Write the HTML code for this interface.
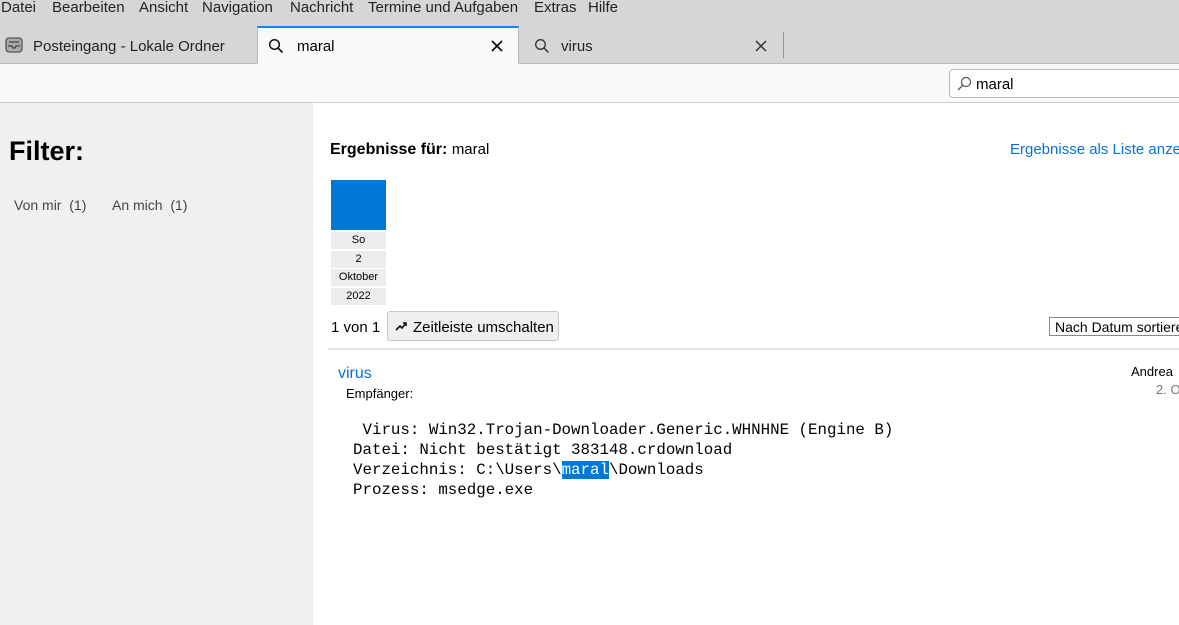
<!DOCTYPE html>
<html><head><meta charset="utf-8"><style>
*{margin:0;padding:0;box-sizing:border-box}
body{width:1179px;height:625px;overflow:hidden;font-family:"Liberation Sans",sans-serif;background:#fff;position:relative;color:#000}
.abs{position:absolute;white-space:nowrap}
#menu{left:0;top:0;width:1179px;height:26px;background:#d6d6d6;font-size:15px;color:#222}
#menu span{position:absolute;top:-1px}
#tabs{left:0;top:26px;width:1179px;height:38px;background:#d6d6d6;border-bottom:1px solid #bbb}
#tool{left:0;top:64px;width:1179px;height:39px;background:#f9f9f9;border-bottom:1px solid #ccc}
#left{left:0;top:103px;width:313px;height:522px;background:#f0f0f0}
.mono{font-family:"Liberation Mono",monospace;font-size:15.8px;white-space:pre;line-height:20px}
.cal{left:331px;width:55px;height:17px;background:#ececec;font-size:11px;text-align:center;line-height:17px}
</style></head><body>
<div id="menu" class="abs">
<span style="left:1px">Datei</span><span style="left:52px">Bearbeiten</span><span style="left:139px">Ansicht</span><span style="left:202px">Navigation</span><span style="left:290px">Nachricht</span><span style="left:368px">Termine und Aufgaben</span><span style="left:534px">Extras</span><span style="left:588px">Hilfe</span>
</div>
<div id="tabs" class="abs">
 <svg class="abs" style="left:5px;top:11px" width="18" height="16" viewBox="0 0 18 16"><rect x="1" y="1" width="16" height="14" rx="3" fill="#aaa" stroke="#555" stroke-width="1.3"/><path d="M4 5h10M3 9h4l1 2h2l1-2h4" stroke="#444" stroke-width="1.3" fill="none"/></svg>
 <div class="abs" style="left:33px;top:12px;font-size:15px;color:#222">Posteingang - Lokale Ordner</div>
 <div class="abs" style="left:257px;top:0;width:262px;height:39px;background:#fafafa;border-top:2px solid #0a84ff;border-left:1px solid #bbb;border-right:1px solid #bbb"></div>
 <svg class="abs" style="left:268px;top:12px" width="16" height="16" viewBox="0 0 16 16"><circle cx="6.5" cy="6.5" r="4.8" stroke="#111" stroke-width="1.5" fill="none"/><path d="M10 10l4.5 4.5" stroke="#111" stroke-width="1.6"/></svg>
 <div class="abs" style="left:297px;top:12px;font-size:15px">maral</div>
 <svg class="abs" style="left:490px;top:13px" width="14" height="14" viewBox="0 0 14 14"><path d="M2 2l10 10M12 2L2 12" stroke="#111" stroke-width="1.8"/></svg>
 <svg class="abs" style="left:534px;top:12px" width="16" height="16" viewBox="0 0 16 16"><circle cx="6.5" cy="6.5" r="4.8" stroke="#333" stroke-width="1.3" fill="none"/><path d="M10 10l4.5 4.5" stroke="#333" stroke-width="1.4"/></svg>
 <div class="abs" style="left:561px;top:12px;font-size:15px;color:#222">virus</div>
 <svg class="abs" style="left:754px;top:13px" width="14" height="14" viewBox="0 0 14 14"><path d="M2 2l10 10M12 2L2 12" stroke="#333" stroke-width="1.5"/></svg>
 <div class="abs" style="left:783px;top:6px;width:1px;height:26px;background:#999"></div>
</div>
<div id="tool" class="abs">
 <div class="abs" style="left:949px;top:5px;width:240px;height:29px;background:#fff;border:1px solid #bbb;border-radius:4px"></div>
 <svg class="abs" style="left:956px;top:12px" width="16" height="16" viewBox="0 0 16 16"><circle cx="10" cy="6" r="4.5" stroke="#555" stroke-width="1.2" fill="none"/><path d="M7 9l-5 5" stroke="#555" stroke-width="1.3"/></svg>
 <div class="abs" style="left:976px;top:12px;font-size:15px">maral</div>
</div>
<div id="left" class="abs">
 <div class="abs" style="left:9px;top:33px;font-size:27px;font-weight:bold">Filter:</div>
 <div class="abs" style="left:14px;top:94px;font-size:14px;color:#444">Von mir&nbsp; (1)</div>
 <div class="abs" style="left:112px;top:94px;font-size:14px;color:#444">An mich&nbsp; (1)</div>
</div>
<div class="abs" style="left:330px;top:141px;font-size:16px"><b>Ergebnisse für:</b> <span style="font-size:15px">maral</span></div>
<div class="abs" style="left:1010px;top:141px;font-size:15px;color:#0a6fd8">Ergebnisse als Liste anzeigen</div>
<div class="abs" style="left:331px;top:180px;width:55px;height:50px;background:#0078d7"></div>
<div class="abs cal" style="top:232px">So</div>
<div class="abs cal" style="top:251px">2</div>
<div class="abs cal" style="top:269px">Oktober</div>
<div class="abs cal" style="top:288px">2022</div>
<div class="abs" style="left:331px;top:319px;font-size:15px">1 von 1</div>
<div class="abs" style="left:387px;top:311px;width:172px;height:30px;background:#efefef;border:1px solid #c8c8c8;border-radius:3px;font-size:15px;padding:7px 0 0 25px">Zeitleiste umschalten</div>
<svg class="abs" style="left:395px;top:321px" width="12" height="10" viewBox="0 0 12 10"><path d="M1 9l4-4 2 2 4-5M8 2h3v3" stroke="#111" stroke-width="1.6" fill="none"/></svg>
<div class="abs" style="left:1049px;top:317px;width:140px;height:19px;border:1px solid #888;font-size:14px;padding:1px 0 0 5px">Nach Datum sortieren</div>
<div class="abs" style="left:328px;top:348px;width:851px;height:2px;background:#e2e2e2"></div>
<div class="abs" style="left:338px;top:365px;font-size:16px;color:#0a6fd8">virus</div>
<div class="abs" style="left:346px;top:386px;font-size:13px">Empfänger:</div>
<div class="abs" style="left:1131px;top:364px;font-size:13px">Andrea</div>
<div class="abs" style="left:1156px;top:382px;font-size:13px;color:#777">2. O</div>
<div class="abs mono" style="left:353px;top:420px"> Virus: Win32.Trojan-Downloader.Generic.WHNHNE (Engine B)
Datei: Nicht bestätigt 383148.crdownload
Verzeichnis: C:\Users\<span style="background:#0078d7;color:#fff">maral</span>\Downloads
Prozess: msedge.exe</div>
</body></html>
